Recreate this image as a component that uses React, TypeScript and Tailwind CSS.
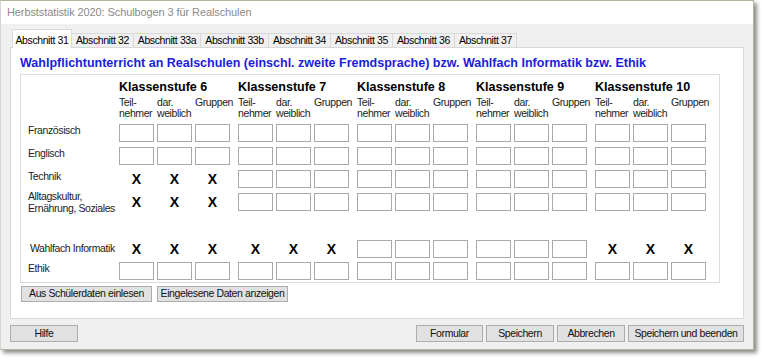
const tabs = [
  { label: "Abschnitt 31", w: "w-[60px]" },
  { label: "Abschnitt 32", w: "w-[62px]" },
  { label: "Abschnitt 33a", w: "w-[67px]" },
  { label: "Abschnitt 33b", w: "w-[68px]" },
  { label: "Abschnitt 34", w: "w-[62px]" },
  { label: "Abschnitt 35", w: "w-[62px]" },
  { label: "Abschnitt 36", w: "w-[62px]" },
  { label: "Abschnitt 37", w: "w-[62px]" },
];

const grades = ["6", "7", "8", "9", "10"];

// which grade groups show an "X" instead of input boxes
const rows = [
  { label: ["Französisch"], marks: [] as number[], gap: "mt-0", shift: "" },
  { label: ["Englisch"], marks: [], gap: "mt-[5px]", shift: "" },
  { label: ["Technik"], marks: [0], gap: "mt-[5px]", shift: "" },
  {
    label: ["Alltagskultur,", "Ernährung, Soziales"],
    marks: [0],
    gap: "mt-[5px]",
    shift: "-mt-[3px] leading-[10px]",
  },
  { label: ["Wahlfach Informatik"], marks: [0, 1, 4], gap: "mt-[26px]", shift: "pt-[2px] pl-[2px]" },
  { label: ["Ethik"], marks: [], gap: "mt-[4px]", shift: "" },
];

function Box() {
  return <div className="w-[35px] h-[18px] border border-[#a9a9a9] bg-white" />;
}

function Mark() {
  return (
    <div className="w-[35px] h-[18px] flex items-center justify-center text-[14px] font-bold leading-none text-black">
      X
    </div>
  );
}

function Btn({ label, w }: { label: string; w: string }) {
  return (
    <div
      className={`${w} h-full flex items-center justify-center whitespace-nowrap bg-[#e1e1e1] border border-[#adadad] text-[10.5px] tracking-[-0.4px] text-[#111]`}
    >
      {label}
    </div>
  );
}

export default function App() {
  return (
    <div className="w-[762px] h-[360px] bg-white font-['Liberation_Sans',Arial,sans-serif] text-black">
      <div className="flex flex-col w-[754px] h-[350px] border border-[#b4b4a0] border-l-[#d4d4d4] bg-[#f0f0f0] shadow-[3px_3px_4px_rgba(0,0,0,0.45)]">
        <div className="h-[23px] shrink-0 bg-white flex items-center pl-[6px] text-[11px] tracking-[-0.1px] text-[#8a8a8a]">
          Herbststatistik 2020: Schulbogen 3 für Realschulen
        </div>

        <div className="flex-1 flex flex-col px-[9px]">
          <div className="h-[23px] flex items-end pl-[2px]">
            {tabs.map((t, i) =>
              i === 0 ? (
                <div
                  key={t.label}
                  className={`${t.w} h-[19px] -mb-[1px] relative z-10 bg-white border border-b-0 border-[#d9d9d9] flex items-start justify-center pt-[3px] text-[10.5px] tracking-[-0.4px]`}
                >
                  {t.label}
                </div>
              ) : (
                <div
                  key={t.label}
                  className={`${t.w} h-[14px] bg-[#f0f0f0] border border-b-0 border-l-0 border-[#d9d9d9] flex items-center justify-center text-[10.5px] tracking-[-0.4px]`}
                >
                  {t.label}
                </div>
              )
            )}
          </div>

          <div className="h-[272px] bg-white border border-[#d9d9d9] pl-[9px] pt-[7px]">
            <div className="text-[12.5px] leading-[16px] font-bold text-[#1c1cdc]">
              Wahlpflichtunterricht an Realschulen (einschl. zweite Fremdsprache) bzw. Wahlfach Informatik bzw. Ethik
            </div>

            <div className="mt-[3px] w-[700px] border border-[#dcdcdc] pl-[7px] pt-[5px] pb-[2px]">
              <div className="flex">
                <div className="w-[91px]" />
                <div className="flex gap-[8px]">
                  {grades.map((g) => (
                    <div key={g} className="w-[111px] text-[12.5px] leading-[14px] font-bold">
                      Klassenstufe {g}
                    </div>
                  ))}
                </div>
              </div>

              <div className="flex mt-[3px]">
                <div className="w-[91px]" />
                <div className="flex gap-[8px]">
                  {grades.map((g) => (
                    <div key={g} className="flex gap-[3px] text-[10.5px] leading-[11px] tracking-[-0.4px] text-[#222]">
                      <div className="w-[35px]">
                        Teil-
                        <br />
                        nehmer
                      </div>
                      <div className="w-[35px]">
                        dar.
                        <br />
                        weiblich
                      </div>
                      <div className="w-[35px] whitespace-nowrap">Gruppen</div>
                    </div>
                  ))}
                </div>
              </div>

              <div className="mt-[5px] flex flex-col">
                {rows.map((r) => (
                  <div key={r.label[0]} className={`flex items-start ${r.gap}`}>
                    <div className={`w-[91px] text-[10.5px] leading-[12px] tracking-[-0.4px] text-[#222] ${r.shift}`}>
                      {r.label.map((l) => (
                        <div key={l}>{l}</div>
                      ))}
                    </div>
                    <div className="flex gap-[8px]">
                      {grades.map((g, gi) => (
                        <div key={g} className="flex gap-[3px]">
                          {r.marks.includes(gi) ? (
                            <>
                              <Mark />
                              <Mark />
                              <Mark />
                            </>
                          ) : (
                            <>
                              <Box />
                              <Box />
                              <Box />
                            </>
                          )}
                        </div>
                      ))}
                    </div>
                  </div>
                ))}
              </div>
            </div>

            <div className="mt-[3px] h-[16px] flex gap-[5px] pl-[1px]">
              <Btn label="Aus Schülerdaten einlesen" w="w-[131px]" />
              <Btn label="Eingelesene Daten anzeigen" w="w-[131px]" />
            </div>
          </div>

          <div className="mt-[6px] h-[17px] flex">
            <Btn label="Hilfe" w="w-[68px]" />
            <div className="ml-auto flex gap-[3px] h-full">
              <Btn label="Formular" w="w-[67px]" />
              <Btn label="Speichern" w="w-[68px]" />
              <Btn label="Abbrechen" w="w-[68px]" />
              <Btn label="Speichern und beenden" w="w-[116px]" />
            </div>
          </div>
        </div>
      </div>
    </div>
  );
}
